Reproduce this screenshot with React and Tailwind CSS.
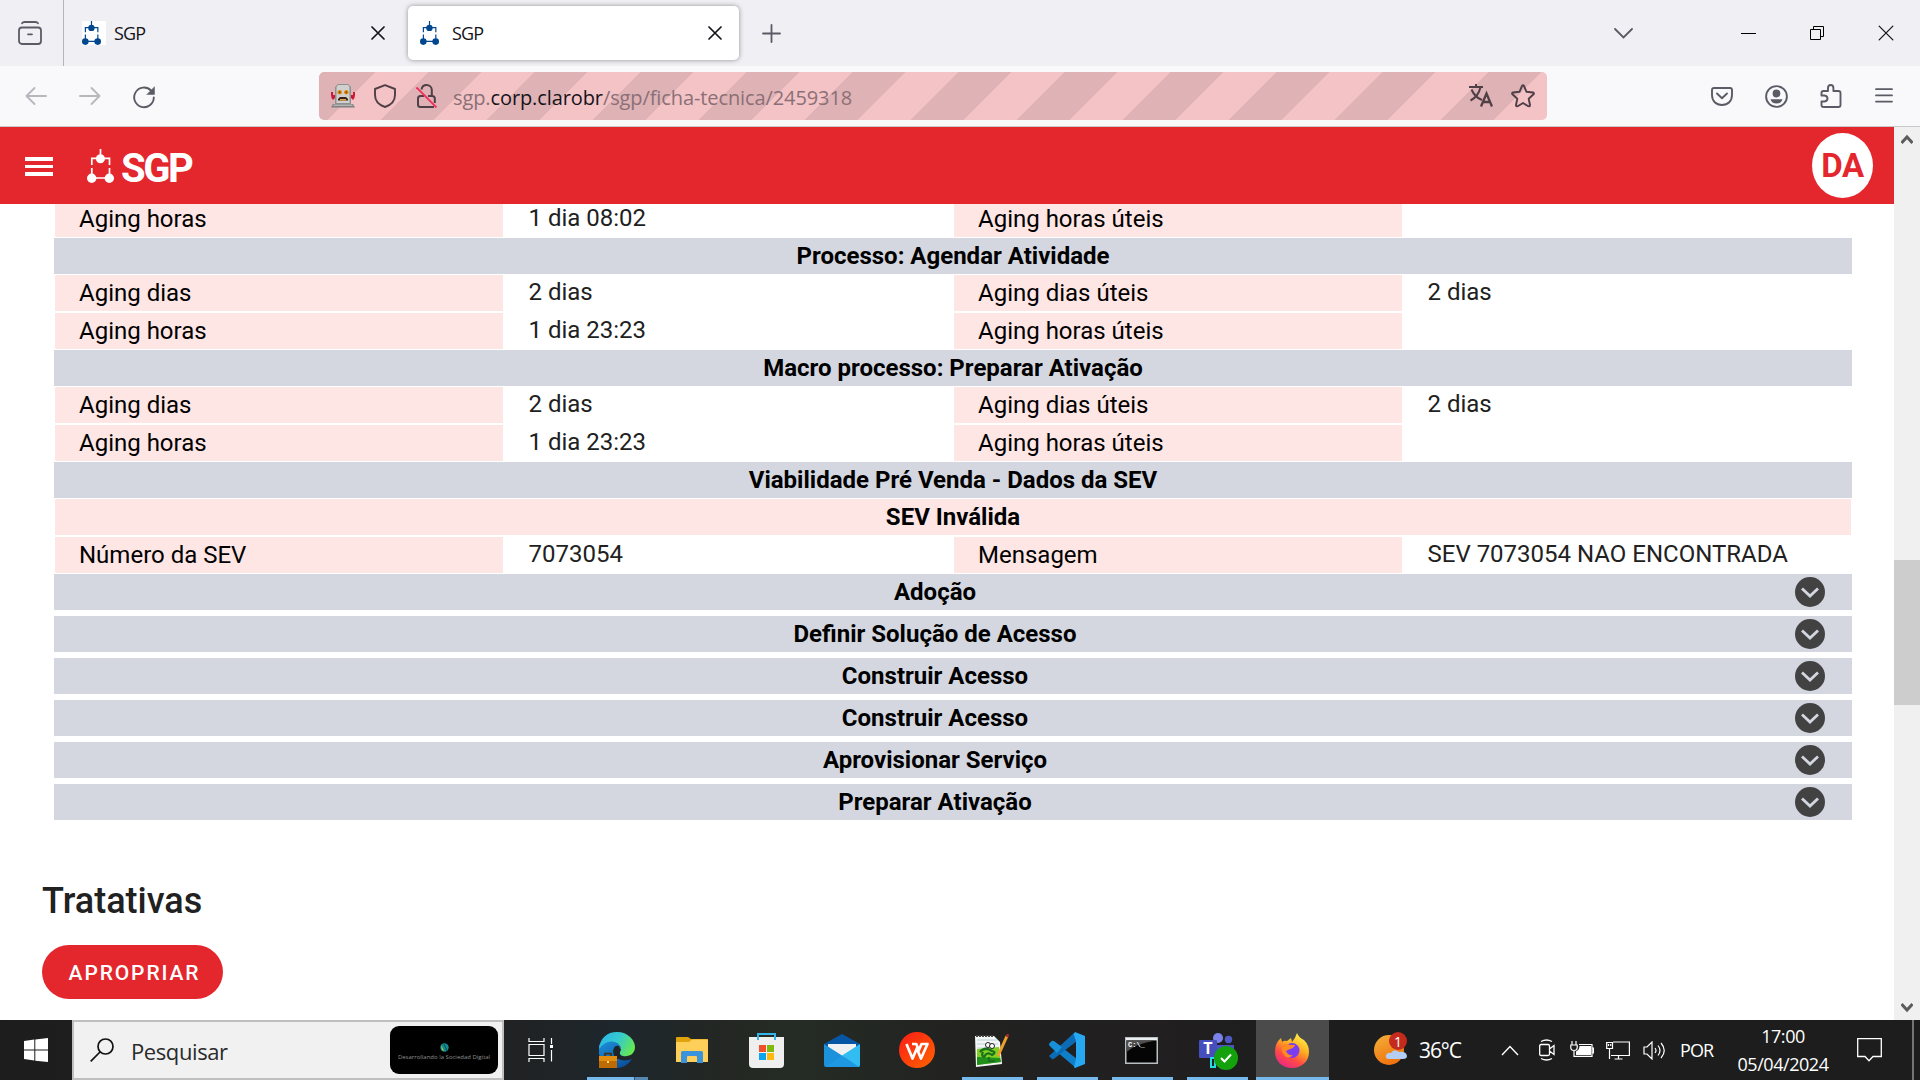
import React from "react";

const Favicon = ({ className, color = "#00478f" }) => (
  <svg className={className} viewBox="0 0 27 34" fill="none" stroke={color} strokeWidth="1.7">
    <path d="M13.5 0V8M4.8 16V9.3H22.5V16M4.8 19V27M22.5 19V27M4.5 29H22.5" />
    <g fill={color} stroke="none">
      <circle cx="13.4" cy="9.8" r="4.5" />
      <circle cx="4.7" cy="29.2" r="4.7" />
      <circle cx="22.3" cy="29.2" r="4.7" />
    </g>
  </svg>
);

const X = ({ className, w = 1.7 }) => (
  <svg className={className} viewBox="0 0 14 14" fill="none" stroke="#15141a" strokeWidth={w} strokeLinecap="round">
    <path d="M1 1L13 13M13 1L1 13" />
  </svg>
);

function TabStrip() {
  return (
    <div className="flex h-[66px] items-center bg-[#f0eff4] text-[18px] text-[#15141a]">
      <div className="flex h-full w-16 items-center border-r border-[#b4b4ba] pl-[18px]">
        <svg className="h-6 w-6" viewBox="0 0 24 24" fill="none" stroke="#5b5b66" strokeWidth="1.8" strokeLinecap="round">
          <rect x="1" y="6.5" width="22" height="16.5" rx="3" />
          <path d="M4 2.2Q4.8 1 6.5 1H17.500Q19.200 1 20 2.200M10 13.300H14" />
        </svg>
      </div>
      <div className="flex w-[344px] items-center pl-[18px]">
        <div className="h-6 w-6 bg-white">
          <Favicon className="h-6 w-[19px]" />
        </div>
        <span className="ml-2 tracking-[-0.9px]">SGP</span>
        <X className="mr-[23px] ml-auto h-[14px] w-[14px]" />
      </div>
      <div className="flex h-[54px] w-[331px] items-center rounded-[5px] bg-white pl-3 shadow-[0_0_5px_rgba(0,0,0,0.4)]">
        <Favicon className="h-6 w-[19px]" />
        <span className="ml-[13px] tracking-[-0.9px]">SGP</span>
        <X className="mr-[17px] ml-auto h-[14px] w-[14px]" />
      </div>
      <svg className="ml-[23px] h-[19px] w-[19px]" viewBox="0 0 19 19" stroke="#5b5b66" strokeWidth="1.8" strokeLinecap="round">
        <path d="M9.500 1V18M1 9.500H18" />
      </svg>
      <svg className="ml-auto h-[11px] w-[19px]" viewBox="0 0 19 11" fill="none" stroke="#5b5b66" strokeWidth="1.8" strokeLinecap="round">
        <path d="M1 1L9.500 9.500L18 1" />
      </svg>
      <div className="ml-[108px] h-px w-[15px] bg-black" />
      <svg className="ml-[54px] h-[14px] w-[14px]" viewBox="0 0 14 14" fill="none" stroke="#000">
        <path d="M.5 3.500H10.500V13.500H.5ZM3.500 3.500V.5H13.500V10.500H10.500" />
      </svg>
      <X className="mr-[26px] ml-[54px] h-4 w-4" w={1.1} />
    </div>
  );
}

function Robot() {
  return (
    <svg className="h-6 w-6" viewBox="0 0 24 24">
      <path d="M0 8H2V11H4V14L2 16Q0 14 0 11ZM24 8H22V11H20V14L22 16Q24 14 24 11Z" fill="#cf1736" />
      <path d="M7 0H17L20 3V20H4V3Z" fill="#8f9090" />
      <path d="M7 1H17L18.500 3V19H5.500V3Z" fill="#d0d1cf" />
      <path d="M2 20H22L24 23.500H0Z" fill="#7f8080" />
      <path d="M3 20.500H21L22 22H2Z" fill="#b4b5b5" />
      <circle cx="8.700" cy="8.200" r="2.300" fill="#e28a12" />
      <circle cx="15.300" cy="8.200" r="2.300" fill="#e28a12" />
      <circle cx="8.700" cy="8.200" r="1" fill="#8a4a0a" />
      <circle cx="15.300" cy="8.200" r="1" fill="#8a4a0a" />
      <path d="M7 16.500V15L9 13H15L17 15V16.500Z" fill="#3a2220" />
      <path d="M9 15H15V16.500H9Z" fill="#e6a23c" />
    </svg>
  );
}

function Toolbar() {
  return (
    <div className="flex h-[61px] items-center border-b border-[#c9c8cb] bg-[#f9f9fb] pl-[25px]">
      <svg className="h-[18px] w-[22px]" viewBox="0 0 22 18" fill="none" stroke="#b7b7bd" strokeWidth="1.8" strokeLinecap="round" strokeLinejoin="round">
        <path d="M21 9H1.500M9.500 1L1.500 9L9.500 17" />
      </svg>
      <svg className="ml-8 h-[18px] w-[22px]" viewBox="0 0 22 18" fill="none" stroke="#b7b7bd" strokeWidth="1.8" strokeLinecap="round" strokeLinejoin="round">
        <path d="M1 9H20.500M12.500 1L20.500 9L12.500 17" />
      </svg>
      <svg className="mt-[3px] ml-8 h-[23px] w-[23px]" viewBox="0 0 23 23" fill="none" stroke="#5b5b66" strokeWidth="1.9" strokeLinecap="round">
        <path d="M20.800 11.500A9.800 9.800 0 1 1 18 4.500" />
        <path d="M21.500 1V8.500H14Z" fill="#5b5b66" strokeWidth="0.500" />
      </svg>
      <div className="ml-[163px] flex h-12 w-[1228px] items-center rounded-[5px] bg-[repeating-linear-gradient(-45deg,#f4c3c6_0,#f4c3c6_37.5px,#dfb2b5_37.5px,#dfb2b5_75px)] pl-3">
        <Robot />
        <svg className="ml-[18px] h-6 w-6" viewBox="0 0 24 24" fill="none" stroke="#4f3f46" strokeWidth="1.900" strokeLinejoin="round">
          <path d="M12 1.200L22 5V11C22 16.500 18 21 12 23C6 21 2 16.500 2 11V5Z" />
        </svg>
        <svg className="ml-[19px] h-6 w-[22px]" viewBox="0 0 22 24" fill="none" stroke="#4f3f46" strokeWidth="2">
          <path d="M5.500 5.500C6 2.500 8 1 10.500 1C13.500 1 15.800 3 15.800 6V11.500M8 12H4.500Q2 12 2 14.500V20.500Q2 23 4.500 23H18M12 12H16Q18.800 12 18.800 14.500V19" />
          <path d="M0.500 3.500L20.500 23.500" stroke="#f0305b" strokeWidth="1.800" />
        </svg>
        <span className="mt-[3px] ml-[15px] text-[20px] tracking-[-0.1px] whitespace-nowrap text-[#8a7076]">
          sgp.<span className="text-[#15141a]">corp.clarobr</span>/sgp/ficha-tecnica/2459318
        </span>
        <svg className="mr-[18px] ml-auto h-6 w-6" viewBox="0 0 24 24" fill="none" stroke="#4f3f46" strokeWidth="2">
          <path d="M0 3H14M7 0V3M2.500 5.500Q6 13.500 13 16M11.500 3Q9.500 12.500 1.500 16.500" />
          <path d="M12 22.500L17.500 9.500L23 22.500M14 18H21" strokeWidth="2.300" />
        </svg>
        <svg className="mr-3 h-6 w-6" viewBox="0 0 24 24" fill="none" stroke="#4f3f46" strokeWidth="1.900" strokeLinejoin="round">
          <path d="M11 2Q12 .2 13 2L15.500 7.800L22 8.500Q23.500 9 22.500 10.300L17.700 14.700L19 21Q19 22.700 17.300 22.200L12 19L6.700 22.200Q5 22.700 5 21L6.300 14.700L1.500 10.300Q.5 9 2 8.500L8.500 7.800Z" />
        </svg>
      </div>
      <div className="ml-[164px] flex items-center">
        <svg className="h-[19px] w-[22px]" viewBox="0 0 22 19" fill="none" stroke="#5b5b66" strokeWidth="1.900" strokeLinecap="round" strokeLinejoin="round">
          <path d="M3 1H19Q21 1 21 3V8C21 14 17 18 11 18C5 18 1 14 1 8V3Q1 1 3 1ZM6 6.500L11 11.300L16 6.500" />
        </svg>
        <svg className="ml-8 h-[23px] w-[23px]" viewBox="0 0 23 23" fill="none" stroke="#5b5b66" strokeWidth="1.900">
          <circle cx="11.500" cy="11.500" r="10.400" />
          <circle cx="11.500" cy="8.500" r="3.900" fill="#5b5b66" stroke="none" />
          <path d="M5.500 14.300H17.500Q16.500 18.500 11.500 18.500T5.500 14.300Z" fill="#5b5b66" stroke="none" />
        </svg>
        <svg className="ml-8 h-6 w-[22px]" viewBox="0 0 22 24" fill="none" stroke="#5b5b66" strokeWidth="1.900" strokeLinejoin="round">
          <path d="M8 7V4Q8 1 10.700 1T13.400 4V7H18.500Q20.500 7 20.500 9V21Q20.500 23 18.500 23H3.500Q1.500 23 1.500 21V17.500H4.500Q7.500 17 7.500 14.500T4.500 11.500H1.500V9Q1.500 7 3.500 7Z" />
        </svg>
        <svg className="mb-[2px] ml-[33px] h-[15px] w-[18px]" viewBox="0 0 18 15" stroke="#5b5b66" strokeWidth="1.800" strokeLinecap="round">
          <path d="M1 1.200H17M1 7.400H17M1 13.600H17" />
        </svg>
      </div>
    </div>
  );
}

function AppHeader() {
  return (
    <header className="flex h-[77px] shrink-0 items-center bg-[#e4262d] pr-[21px] pl-[25px]">
      <div className="mt-[2px] flex w-7 flex-col gap-1">
        <div className="h-[3.500px] bg-white" />
        <div className="h-[3.500px] bg-white" />
        <div className="h-[3.500px] bg-white" />
      </div>
      <Favicon className="ml-[34px] h-[34px] w-[27px]" color="#fff" />
      <span className="mt-[7px] ml-[7px] text-[40px] font-bold tracking-[-2.500px] text-white">SGP</span>
      <div className="ml-auto flex h-[65px] w-[61px] items-center justify-center rounded-[50%] bg-white text-[33px] font-bold tracking-[-0.300px] text-[#e4262d]">
        DA
      </div>
    </header>
  );
}

const Label = ({ children }) => (
  <div className="border border-white bg-[#fee6e4] pt-[3px] pl-6 leading-[30px] text-black">{children}</div>
);
const Value = ({ children }) => (
  <div className="border border-white pt-[2px] pl-6 leading-[30px] whitespace-nowrap text-[#212121]">{children}</div>
);
const Row = ({ cells }) => (
  <div className="grid h-[38px] grid-cols-4">
    <Label>{cells[0]}</Label>
    <Value>{cells[1]}</Value>
    <Label>{cells[2]}</Label>
    <Value>{cells[3]}</Value>
  </div>
);
const Title = ({ children }) => (
  <div className="h-9 bg-[#d4d7df] text-center leading-9 font-bold text-black">{children}</div>
);
const Accordion = ({ children }) => (
  <div className="grid h-9 grid-cols-[21px_1fr_57px] items-center bg-[#d4d7df] text-center font-bold text-black">
    <span />
    <span className="leading-9">{children}</span>
    <svg className="-mt-px h-[30px] w-[30px]" viewBox="0 0 30 30" fill="none">
      <circle cx="15" cy="15" r="15" fill="#424242" />
      <path d="M7 11.500L15 19L23 11.500" stroke="#d4d7df" strokeWidth="2.800" />
    </svg>
  </div>
);

const stages = ["Adoção", "Definir Solução de Acesso", "Construir Acesso", "Construir Acesso", "Aprovisionar Serviço", "Preparar Ativação"];

function Page() {
  return (
    <div className="flex h-[893px] font-[Roboto,sans-serif]">
      <div className="flex min-w-0 flex-1 flex-col overflow-hidden bg-white">
        <AppHeader />
        <main className="flex min-h-0 flex-1 flex-col justify-start overflow-hidden">
          <div className="-mt-1 mr-[42px] ml-[54px] text-[24px]">
            <Row cells={["Aging horas", "1 dia 08:02", "Aging horas úteis", ""]} />
            <Title>Processo: Agendar Atividade</Title>
            <Row cells={["Aging dias", "2 dias", "Aging dias úteis", "2 dias"]} />
            <Row cells={["Aging horas", "1 dia 23:23", "Aging horas úteis", ""]} />
            <Title>Macro processo: Preparar Ativação</Title>
            <Row cells={["Aging dias", "2 dias", "Aging dias úteis", "2 dias"]} />
            <Row cells={["Aging horas", "1 dia 23:23", "Aging horas úteis", ""]} />
            <Title>Viabilidade Pré Venda - Dados da SEV</Title>
            <div className="h-[38px] border border-white bg-[#fee6e4] text-center leading-9 font-bold text-black">SEV Inválida</div>
            <Row cells={["Número da SEV", "7073054", "Mensagem", "SEV 7073054 NAO ENCONTRADA"]} />
            <div className="flex flex-col gap-1.5">
              {stages.map((s, i) => (
                <Accordion key={i}>{s}</Accordion>
              ))}
            </div>
          </div>
          <h2 className="mt-[57px] ml-[42px] text-[36px] leading-[48px] font-medium text-[#212121]">Tratativas</h2>
          <button className="mt-5 ml-[42px] flex h-[54px] w-[181px] shrink-0 items-center justify-center rounded-full bg-[#e4262d] pt-1 pl-1 text-[21px] font-medium tracking-[1.880px] text-white">
            APROPRIAR
          </button>
        </main>
      </div>
      <div className="flex w-[26px] flex-col items-center justify-between bg-[#f0f0f0] py-[7px]">
        <svg className="h-[11px] w-3" viewBox="0 0 12 11" fill="none" stroke="#5c5c5c" strokeWidth="3">
          <path d="M0.500 9L6 3L11.500 9" />
        </svg>
        <div className="mt-[415px] h-[145px] w-full bg-[#cdcdcd]" />
        <svg className="mt-auto h-[11px] w-3" viewBox="0 0 12 11" fill="none" stroke="#5c5c5c" strokeWidth="3">
          <path d="M0.500 2L6 8L11.500 2" />
        </svg>
      </div>
    </div>
  );
}

const Task = ({ children, bar, active }) => (
  <div className={active ? "flex h-full w-[75px] flex-col items-center px-px" : "flex h-full w-[75px] flex-col items-center px-[7px]"}>
    <div className={active ? "flex h-[57px] w-full items-center justify-center bg-[#4b4b4b] pt-[3px]" : "flex h-[57px] w-full items-center justify-center pt-[3px] pr-[2px]"}>{children}</div>
    {bar && <div className="h-[3px] w-full bg-[#76b9ed]" />}
  </div>
);

function Apps() {
  return (
    <div className="ml-px flex h-full">
      <Task>
        <svg className="mr-px h-6 w-[26px]" viewBox="0 0 26 24" fill="none" stroke="#fff" strokeWidth="1.200">
          <path d="M1 0V3.500H16V0M1 24V20.500H16V24M1 6.500H16V17.500H1ZM23.500 0V6M23.500 12V23.500" />
          <path d="M22 7H25V10H22Z" fill="#fff" stroke="none" />
        </svg>
      </Task>
      <div className="flex h-full w-[75px] flex-col pl-[7px]">
        <div className="flex h-[57px] items-center pt-[3px] pl-3">
          <svg className="h-9 w-9" viewBox="0 0 36 36">
            <defs>
              <linearGradient id="edgeTop" x1="0" y1="0.200" x2="1" y2="0.600">
                <stop offset="0" stopColor="#2bb5e8" />
                <stop offset="0.500" stopColor="#35c9cf" />
                <stop offset="1" stopColor="#66e84f" />
              </linearGradient>
              <linearGradient id="edgeLow" x1="0" y1="0" x2="0.600" y2="1">
                <stop offset="0" stopColor="#1c93dc" />
                <stop offset="1" stopColor="#0b52a0" />
              </linearGradient>
            </defs>
            <path d="M0 14Q3 7 12 9Q22 11 22 17Q16 16 16 22Q18 30 30 28L33 27Q27 36 17 36Q3 35 0 22Z" fill="url(#edgeLow)" />
            <path d="M0 17C1 6 8 0 18 0C29 0 36 8 36 15C36 22 30 25 24 24Q20 23 21 20Q24 15 18 11Q8 6 0 17Z" fill="url(#edgeTop)" />
            <path d="M14 19Q15 13 20 14Q22 18 20 21Q21 25 28 27H17Q14 23 14 19Z" fill="#202327" />
            <path d="M6 24V21.500H12V24" fill="none" stroke="#4c2d09" strokeWidth="1.600" />
            <path d="M0 24H18V36H0Z" fill="#bd6b04" />
            <path d="M0 24H18V29H0Z" fill="#e28d10" />
            <path d="M8 29H10V31H8Z" fill="#ffe36a" />
          </svg>
        </div>
        <div className="flex h-[3px]">
          <div className="w-[47px] bg-[#76b9ed]" />
          <div className="w-px bg-[#35526a]" />
          <div className="w-[13px] bg-[#5687b0]" />
        </div>
      </div>
      <Task>
        <svg className="h-[27px] w-8" viewBox="0 0 32 27">
          <path d="M0 1Q0 0 1 0H12L15 2H31Q32 2 32 3V25H0Z" fill="#e0a30c" />
          <path d="M0 5H13L16 2.500H32V24Q32 25 31 25H1Q0 25 0 24Z" fill="#fed05a" />
          <path d="M5 26V15.500Q5 14 6.500 14H25.500Q27 14 27 15.500V26H21V20Q21 19 20 19H12Q11 19 11 20V26Z" fill="#3b93dc" />
        </svg>
      </Task>
      <Task>
        <svg className="h-[35px] w-[35px]" viewBox="0 0 35 35">
          <path d="M0 4H35V31Q35 35 31 35H4Q0 35 0 31Z" fill="#efefef" />
          <path d="M9 7V1H26V7" fill="none" stroke="#35b4ea" strokeWidth="2" />
          <path d="M10 12H17V19H10Z" fill="#f0502a" />
          <path d="M18 12H25V19H18Z" fill="#7fba0d" />
          <path d="M10 20H17V27H10Z" fill="#0ba4ee" />
          <path d="M18 20H25V27H18Z" fill="#fdb90c" />
        </svg>
      </Task>
      <Task>
        <svg className="h-[33px] w-9" viewBox="0 0 36 33">
          <path d="M0 10L18 0L36 10V20H0Z" fill="#0756a6" />
          <path d="M4 10H32V24H4Z" fill="#f1f1f3" />
          <path d="M0 10L36 33H2Q0 33 0 31Z" fill="#1c92dd" />
          <path d="M36 10V31Q36 33 34 33L18 21.500Z" fill="#31bdf2" />
          <path d="M1 33L18 21.500L35 33Z" fill="#1e98e2" />
        </svg>
      </Task>
      <Task>
        <svg className="h-9 w-9" viewBox="0 0 36 36" fill="none">
          <defs>
            <linearGradient id="wps" x1="0" y1="0" x2="1" y2="1">
              <stop offset="0" stopColor="#fc1b16" />
              <stop offset="1" stopColor="#ff6500" />
            </linearGradient>
          </defs>
          <circle cx="18" cy="18" r="18" fill="url(#wps)" />
          <path d="M7.500 12L13.500 26.500L18.500 15L17.300 12H13M17.800 16.500L22 26.500L28.500 12H22.500L19.500 19" stroke="#fff" strokeWidth="2.700" strokeLinejoin="round" />
        </svg>
      </Task>
      <Task bar>
        <svg className="h-[33px] w-[34px]" viewBox="0 0 34 33">
          <path d="M0 2H19L25 8L27 30L1 33Z" fill="#f4f5f5" />
          <path d="M2 6H22M2 10H23M2 14H24" stroke="#b9d2df" />
          <path d="M2 15L24 13L26 28L2 31Z" fill="#80cf22" />
          <path d="M2 23L25 24L26 28L2 31Z" fill="#20901b" />
          <path d="M5 18Q10 12 17 17Q22 18 17 21Q12 17 9 23Q6 22 8 18M14 23V27H20" fill="none" stroke="#19711c" strokeWidth="2.200" />
          <circle cx="13" cy="11" r="2.500" fill="#fff" stroke="#222" />
          <circle cx="17" cy="12" r="2.500" fill="#fff" stroke="#222" />
          <path d="M1 2H18" stroke="#444" strokeWidth="2" strokeDasharray="2 1" />
          <path d="M23 22L32 2" stroke="#eda12b" strokeWidth="3" />
          <path d="M32 3L33 0" stroke="#a92828" strokeWidth="2.500" />
        </svg>
      </Task>
      <Task bar>
        <svg className="h-9 w-9" viewBox="0 0 36 36">
          <path d="M0 12L3 9Q4 8.500 5 9.300L28 27L27 36L1 14Q0 13 0 12Z" fill="#0f7fca" />
          <path d="M0 24L25 1L28 9L5 26.700Q4 27.500 3 27L0 24Z" fill="#0b6bb5" />
          <path d="M0 12L3 9Q4 8.500 5 9.300L13 15L8 21L1 14Z" fill="#1790d9" />
          <path d="M26 0L36 4V32L26 36Q25.500 36 25 35L27 27V9L24.500 2Z" fill="#27a9f1" />
        </svg>
      </Task>
      <Task bar>
        <svg className="h-[27px] w-[33px]" viewBox="0 0 33 27">
          <path d="M0 0H33V27H0Z" fill="#b9bec2" />
          <path d="M1 1H32V3H1Z" fill="#e9eef0" />
          <path d="M1.500 3.500H31.500V25.500H1.500Z" fill="#050505" />
          <path d="M1.500 3.500H31Q12 6 1.500 15Z" fill="#4d4d4d" />
          <text x="3" y="10" fill="#fff" fontSize="7" fontWeight="bold" fontFamily="Liberation Mono, monospace">C:\_</text>
        </svg>
      </Task>
      <Task bar>
        <svg className="mt-[3px] ml-1 h-[37px] w-[39px]" viewBox="0 0 39 37">
          <circle cx="19" cy="5" r="5" fill="#7b83eb" />
          <circle cx="29.500" cy="6.500" r="3.700" fill="#5159c9" />
          <path d="M17 12H35V19Q34 28 26 29H18Z" fill="#4c54c5" />
          <path d="M0 8Q0 7 1 7H17Q18 7 18 8V24Q18 25 17 25H1Q0 25 0 24Z" fill="#464ebd" />
          <path d="M12 25H16V34H12Z" fill="none" stroke="#27dae4" strokeWidth="2" />
          <text x="9" y="21" textAnchor="middle" fill="#fff" fontSize="16" fontWeight="bold" fontFamily="Open Sans, sans-serif">T</text>
          <circle cx="27" cy="25" r="12" fill="#13a10e" />
          <path d="M22 25L25.500 28.500L32 21.500" fill="none" stroke="#fff" strokeWidth="2" />
        </svg>
      </Task>
      <Task bar active>
        <svg className="mr-px h-[35px] w-[35px]" viewBox="0 0 35 35">
          <defs>
            <linearGradient id="fox" x1="0.800" y1="0" x2="0.250" y2="1">
              <stop offset="0.050" stopColor="#fff04a" />
              <stop offset="0.400" stopColor="#ffac21" />
              <stop offset="0.700" stopColor="#ff4a45" />
              <stop offset="1" stopColor="#e8258a" />
            </linearGradient>
          </defs>
          <path d="M22 0Q24 5 29 7Q34 12 34 19C34 29 26 35 17 35C7 35 0 28 0 19Q0 11 4 7L6 5L7 9Q9 7 12 8L16 5L17 9Q20 6 22 0Z" fill="url(#fox)" />
          <circle cx="17" cy="17.500" r="7.500" fill="#7b3df0" />
          <path d="M8 12Q12 10 15 12L20 12Q19 15 15 16L11 18Q13 23 18 22Q13 27 9 22Q5 17 8 12Z" fill="#ff8a22" />
        </svg>
      </Task>
    </div>
  );
}

function Tray() {
  return (
    <div className="flex h-full flex-1 items-center text-white">
      <svg className="ml-[44px] h-9 w-[34px]" viewBox="0 0 34 36">
        <defs>
          <linearGradient id="sun" x1="0" y1="0" x2="0.500" y2="1">
            <stop offset="0" stopColor="#f3b13a" />
            <stop offset="1" stopColor="#f0730f" />
          </linearGradient>
        </defs>
        <circle cx="15" cy="18" r="15" fill="url(#sun)" />
        <path d="M15 27Q11 27 12 23Q14 20 17 21Q20 16 25 20Q32 19 33 24Q33 27 29 27Z" fill="#b4cdf4" />
        <circle cx="24" cy="9" r="9" fill="#c42b1c" />
        <text x="24" y="14.500" textAnchor="middle" fill="#fff" fontSize="14" fontFamily="Open Sans, sans-serif">1</text>
      </svg>
      <span className="mt-0.5 ml-[11px] w-[47px] text-[21px] tracking-[-1.100px] whitespace-nowrap">36°C</span>
      <svg className="ml-[35px] h-[11px] w-[18px]" viewBox="0 0 18 11" fill="none" stroke="#fff" strokeWidth="1.400">
        <path d="M1 10L9 1.500L17 10" />
      </svg>
      <svg className="ml-5 h-[22px] w-4" viewBox="0 0 16 22" fill="none" stroke="#fff" strokeWidth="1.300">
        <path d="M2 2.500Q7.500 -.5 13 2.500M2 19.500Q7.500 22.500 13 19.500M2 5.500H9Q10.500 5.500 10.500 7V15Q10.500 16.500 9 16.500H2Q.7 16.500 .7 15V7Q.7 5.500 2 5.500ZM10.500 10L15 6.500V15.500L10.500 12" />
      </svg>
      <svg className="mb-[2px] ml-[15px] h-4 w-6" viewBox="0 0 24 16" fill="none" stroke="#fff" strokeWidth="1.200">
        <path d="M2 0V4M6 0V4M.8 4H7.200V7Q7 9.500 4 9.500Q1 9.500 .8 7ZM4 9.500V15.300H22V3.500H9M22 7H23.400V12H22" />
        <path d="M9.500 5H21V14H6V10.500Q9.500 9 9.500 5Z" fill="#fff" stroke="none" />
      </svg>
      <svg className="ml-3 h-[19px] w-6" viewBox="0 0 24 19" fill="none" stroke="#fff" strokeWidth="1.200">
        <path d="M7 1H23.400V14.500H5M12.500 14.500V18M8.500 18H16.500M.7 1.500H6.500V7.500H.7ZM3.500 7.500V18M2.500 3V5M4.700 3V5" />
      </svg>
      <svg className="ml-[13px] h-[19px] w-[23px]" viewBox="0 0 23 19" fill="none" stroke="#fff" strokeWidth="1.200">
        <path d="M1 6H4L9 1V18L4 13H1ZM12 7Q14 9.500 12 12M15 4.500Q19 9.500 15 14.500M18 2Q24.500 9.500 18 17" />
      </svg>
      <span className="mt-px ml-[14px] w-9 text-[18px] tracking-[-0.900px]">POR</span>
      <div className="ml-[18px] flex w-[98px] flex-col items-center text-[18px] leading-7 tracking-[-0.450px] whitespace-nowrap">
        <span>17:00</span>
        <span>05/04/2024</span>
      </div>
      <svg className="ml-[25px] h-6 w-[25px]" viewBox="0 0 25 24" fill="none" stroke="#fff" strokeWidth="1.300">
        <path d="M.7.7H24.300V18.500H16L12 22.800L8 18.500H.7Z" />
      </svg>
      <div className="mr-[6px] ml-auto h-full w-[2px] bg-[#747474]" />
    </div>
  );
}

function Taskbar() {
  return (
    <div className="flex h-[60px] bg-[linear-gradient(90deg,#1d1d1d_0%,#202223_27%,#1e272d_32%,#242723_38%,#252c25_41%,#222221_50%,#211f20_60%,#1d1d1d_70%)]">
      <div className="flex w-[72px] items-center justify-center">
        <svg className="h-6 w-6" viewBox="0 0 24 24" fill="#fff">
          <path d="M0 3L10.300 1.500V11.500H0ZM11.300 1.400L24 0V11.500H11.300ZM0 12.500H10.300V22.500L0 21ZM11.300 12.500H24V24L11.300 22.700Z" />
        </svg>
      </div>
      <div className="flex w-[432px] items-center border-2 border-[#bfbfbf] bg-[#f1f1f1] pl-4 text-[#2b2b2b]">
        <svg className="h-6 w-6" viewBox="0 0 24 24" fill="none" stroke="#111" strokeWidth="1.700">
          <circle cx="15.500" cy="8.500" r="7.500" />
          <path d="M10 14L.7 23.300" />
        </svg>
        <span className="mt-[2px] ml-[17px] text-[22px] tracking-[-0.400px]">Pesquisar</span>
        <div className="mr-1 ml-auto flex h-12 w-[108px] flex-col items-center justify-center rounded-[9px] bg-black pt-1">
          <svg className="h-[9px] w-[9px]" viewBox="0 0 9 9">
            <circle cx="4.500" cy="4.500" r="4.200" fill="#138c91" />
            <path d="M1 2L4 8L2 7Z" fill="#b5c942" />
            <path d="M4 1L7 8" stroke="#07484b" />
          </svg>
          <span className="mt-px text-[6px] leading-[9px] whitespace-nowrap text-[#8f8f8f]">Desarrollando la Sociedad Digital</span>
        </div>
      </div>
      <Apps />
      <Tray />
    </div>
  );
}

export default function App() {
  return (
    <div className="flex h-[1080px] w-[1920px] flex-col overflow-hidden bg-white font-['Open_Sans',sans-serif]">
      <TabStrip />
      <Toolbar />
      <Page />
      <Taskbar />
    </div>
  );
}
